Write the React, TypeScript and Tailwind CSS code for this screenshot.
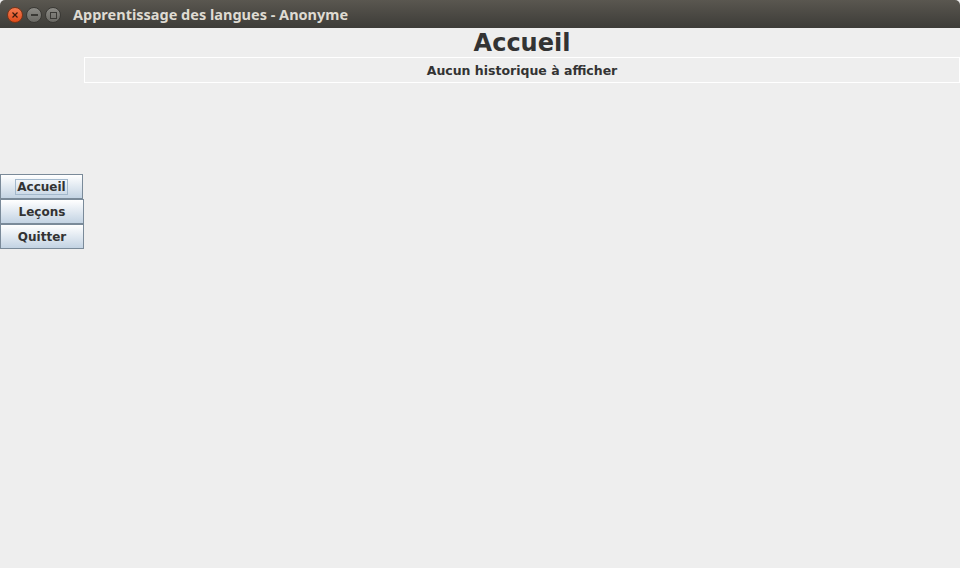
export default function App() {
  const buttons = ['Accueil', 'Leçons', 'Quitter'];

  return (
    <div className="w-[960px] h-[568px] flex flex-col bg-[#eeeeee] overflow-hidden">
      {/* Title bar */}
      <div className="h-[28px] pt-[2px] flex items-center bg-gradient-to-b from-[#5a5750] to-[#3d3c38] rounded-t-[5px]">
        <div className="flex items-center gap-[3px] pl-[7px]">
          <div className="w-[16px] h-[16px] rounded-full bg-gradient-to-b from-[#f47a4f] to-[#df4a16] border border-[#7a3418] flex items-center justify-center">
            <svg width="6" height="6" viewBox="0 0 6 6">
              <path d="M0.5 0.5 L5.5 5.5 M5.5 0.5 L0.5 5.5" stroke="#3a1a0c" strokeWidth="1.2" />
            </svg>
          </div>
          <div className="w-[16px] h-[16px] rounded-full bg-gradient-to-b from-[#8c8b86] to-[#6a6964] border border-[#3a3935] flex items-center justify-center">
            <div className="w-[7px] h-[1.5px] bg-[#3a3935]" />
          </div>
          <div className="w-[16px] h-[16px] rounded-full bg-gradient-to-b from-[#8c8b86] to-[#6a6964] border border-[#3a3935] flex items-center justify-center">
            <div className="w-[7px] h-[7px] border border-[#3a3935]" />
          </div>
        </div>
        <span className="ml-[12px] text-[14.5px] font-bold text-[#dfdbd2] font-['Noto_Sans',sans-serif]">
          Apprentissage des langues - Anonyme
        </span>
      </div>

      {/* Body */}
      <div className="flex-1 flex font-['DejaVu_Sans',sans-serif] text-[#333333]">
        {/* Menu */}
        <div className="w-[84px] pt-[146px] flex flex-col">
          {buttons.map((label, i) => (
            <button
              key={label}
              className={`h-[25px] ${i === 0 ? 'w-[83px]' : 'w-[84px]'} flex items-center justify-center border border-[#7a8a99] bg-gradient-to-b from-white to-[#c3d3e3] text-[12px] font-bold`}
            >
              <span className={i === 0 ? 'border border-[#a3b8cc] px-[1px] leading-[14px]' : 'leading-[14px]'}>
                {label}
              </span>
            </button>
          ))}
        </div>

        {/* Content */}
        <div className="flex-1 flex flex-col">
          <h1 className="h-[29px] flex items-center justify-center text-[24px] font-bold leading-none">
            Accueil
          </h1>
          <div className="h-[26px] pt-[2px] border border-white flex items-center justify-center text-[12.5px] font-bold">
            Aucun historique à afficher
          </div>
        </div>
      </div>
    </div>
  );
}
